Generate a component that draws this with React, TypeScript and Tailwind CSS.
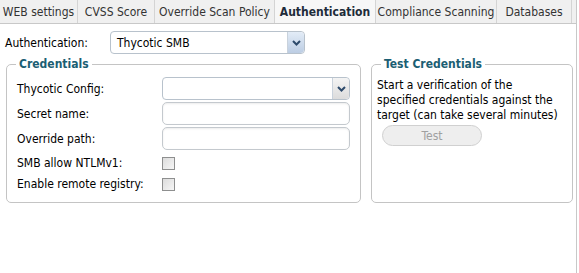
import React from "react";

const tabs = [
  { name: "WEB settings", w: "w-[78px]" },
  { name: "CVSS Score", w: "w-[77px]" },
  { name: "Override Scan Policy", w: "w-[120px]" },
  { name: "Authentication", w: "w-[101px]" },
  { name: "Compliance Scanning", w: "w-[121px]" },
  { name: "Databases", w: "w-[75px]" },
];

const Chevron = () => (
  <svg width="9" height="6" viewBox="0 0 9 6">
    <path d="M1 1 L4.5 4.5 L8 1" fill="none" stroke="#2d4a6b" strokeWidth="2" />
  </svg>
);

const SelectBox = ({ value, width, blue }: { value?: string; width: string; blue?: boolean }) => (
  <div
    className={`flex h-[23px] items-stretch rounded-[4px] border border-[#b8c2cc] bg-white ${width}`}
  >
    <div className="flex flex-1 items-center px-[6px] text-[12px] text-black">{value}</div>
    <div
      className={`flex w-[17px] items-center justify-center rounded-r-[4px] border-l border-[#c9d2dc] ${
        blue ? "bg-gradient-to-b from-[#e3ecf7] to-[#bccde3]" : "bg-gradient-to-b from-[#f4f4f4] to-[#dcdcdc]"
      }`}
    >
      <Chevron />
    </div>
  </div>
);

const TextBox = () => (
  <div className="h-[23px] w-[188px] rounded-[5px] border border-[#c4c9ce] bg-white shadow-[inset_0_1px_2px_rgba(0,0,0,0.08)]" />
);

const CheckBox = () => (
  <div className="h-[13px] w-[13px] border border-[#8e8f8f] bg-gradient-to-br from-[#dcdcdc] to-[#f6f6f6]" />
);

const Row = ({ label, children }: { label: string; children: React.ReactNode }) => (
  <div className="flex items-center">
    <div className="w-[155px] pl-[10px] text-[12px] text-black">{label}</div>
    {children}
  </div>
);

export default function App() {
  return (
    <div
      className="h-[273px] w-[579px] overflow-hidden bg-white"
      style={{ fontFamily: "'DejaVu Sans Condensed', 'DejaVu Sans', Tahoma, sans-serif", fontStretch: "condensed" }}
    >
      <div className="h-[273px] w-[577px] border-r border-[#c8c8c8]">
        {/* tab strip */}
        <div className="flex h-[24px] border-b border-[#c8c8c8] bg-[#f0f0f0]">
          {tabs.map((t) => {
            const active = t.name === "Authentication";
            return (
              <div
                key={t.name}
                className={`flex items-center justify-center whitespace-nowrap border-r border-[#d4d4d4] text-[12px] ${t.w} ${
                  active ? "bg-[#f7f7f7] font-bold text-[#1e2c3a]" : "text-[#333]"
                }`}
              >
                {t.name}
              </div>
            );
          })}
        </div>

        <div className="flex items-center pt-[7px] pl-[5px]">
          <div className="w-[105px] text-[12px] text-black">Authentication:</div>
          <SelectBox value="Thycotic SMB" width="w-[195px]" blue />
        </div>

        <div className="mt-[1px] flex gap-[10px] pl-[6px]">
          <fieldset className="h-[148px] w-[355px] rounded-[5px] border border-[#c4c4c4] pt-[4px]">
            <legend className="ml-[9px] px-[3px] text-[12px] font-bold text-[#1b5e73]">Credentials</legend>
            <div className="flex flex-col gap-[2px]">
              <Row label="Thycotic Config:">
                <SelectBox width="w-[188px]" />
              </Row>
              <Row label="Secret name:">
                <TextBox />
              </Row>
              <Row label="Override path:">
                <TextBox />
              </Row>
              <div className="mt-[2px] flex flex-col gap-[3px]">
                <Row label="SMB allow NTLMv1:">
                  <CheckBox />
                </Row>
                <Row label="Enable remote registry:">
                  <CheckBox />
                </Row>
              </div>
            </div>
          </fieldset>

          <fieldset className="h-[148px] w-[202px] rounded-[5px] border border-[#c4c4c4] pt-[5px]">
            <legend className="ml-[9px] px-[3px] text-[12px] font-bold text-[#1b5e73]">Test Credentials</legend>
            <div className="px-[5px] text-[12px] leading-[15px] text-black">
              Start a verification of the
              <br />
              specified credentials against the
              <br />
              target (can take several minutes)
            </div>
            <div className="mt-[2px] ml-[10px] flex h-[21px] w-[100px] items-center justify-center rounded-full border border-[#d0d0d0] bg-[#eeeeee] text-[12px] text-[#a0a0a0]">
              Test
            </div>
          </fieldset>
        </div>
      </div>
    </div>
  );
}
